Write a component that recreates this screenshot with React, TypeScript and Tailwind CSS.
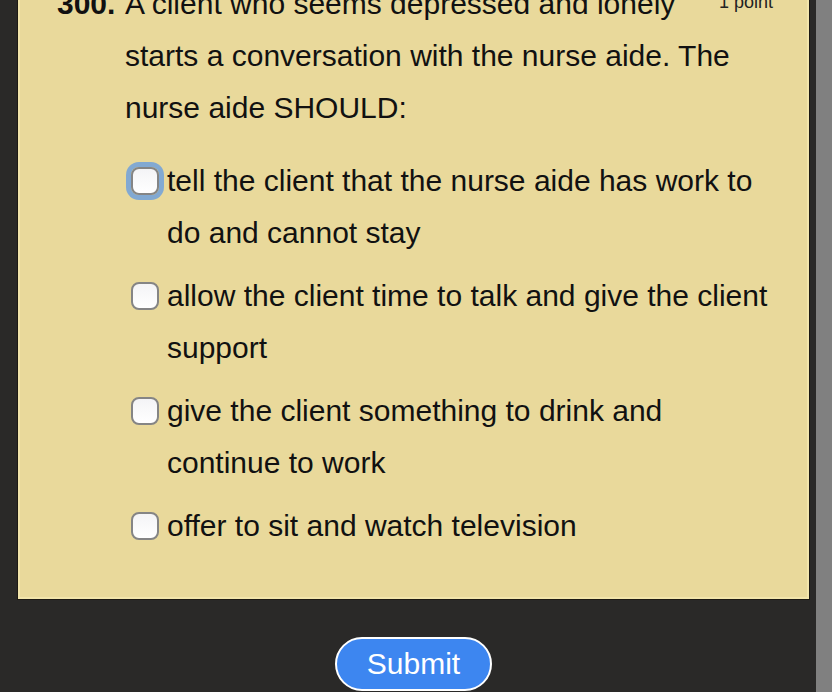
import React from "react";

const options = [
  "tell the client that the nurse aide has work to do and cannot stay",
  "allow the client time to talk and give the client support",
  "give the client something to drink and continue to work",
  "offer to sit and watch television",
];

function Box({ focused }: { focused?: boolean }) {
  return (
    <span
      className={
        "mt-[12px] ml-[6px] mr-[8px] block h-[28px] w-[28px] shrink-0 rounded-[8px] border-[2.5px] border-[#858585] bg-gradient-to-b from-[#f4f4f6] to-white " +
        (focused ? "shadow-[0_0_0_5px_#82a9d2]" : "")
      }
    />
  );
}

export default function App() {
  return (
    <div
      className="flex h-[692px] w-[832px] overflow-hidden bg-[#2a2928] text-[#111]"
      style={{ fontFamily: '"Liberation Sans", Arial, sans-serif' }}
    >
      <div className="flex flex-1 flex-col pl-[18px] pr-[7px]">
        <div className="-mt-[24px] border-[2px] border-[#f2e5ab] bg-[#e9d99b] pb-[45px] pl-[37px] pr-[34px] shadow-[0_0_0_1px_#1d1a14]">
          <div className="flex text-[30px] leading-[52px]">
            <div className="w-[68px] shrink-0 font-bold">300.</div>
            <div className="flex-1">
              <span className="float-right mt-[14px] text-[18px] leading-[20px] text-[#222]">1 point</span>
              A client who seems depressed and lonely starts a conversation with the nurse aide. The nurse aide SHOULD:
            </div>
          </div>
          <div className="ml-[68px] mt-[21px] flex flex-col gap-[11px]">
            {options.map((o, i) => (
              <div key={i} className="flex items-start text-[30px] leading-[52px]">
                <Box focused={i === 0} />
                <span className="flex-1">{o}</span>
              </div>
            ))}
          </div>
        </div>
        <div className="mt-[38px] flex justify-center">
          <button className="h-[54px] w-[157px] rounded-full border-[2px] border-white bg-[#3d86f0] text-[30px] leading-[30px] text-white">
            Submit
          </button>
        </div>
      </div>
      <div className="w-[16px] shrink-0 bg-[#808080]" />
    </div>
  );
}
